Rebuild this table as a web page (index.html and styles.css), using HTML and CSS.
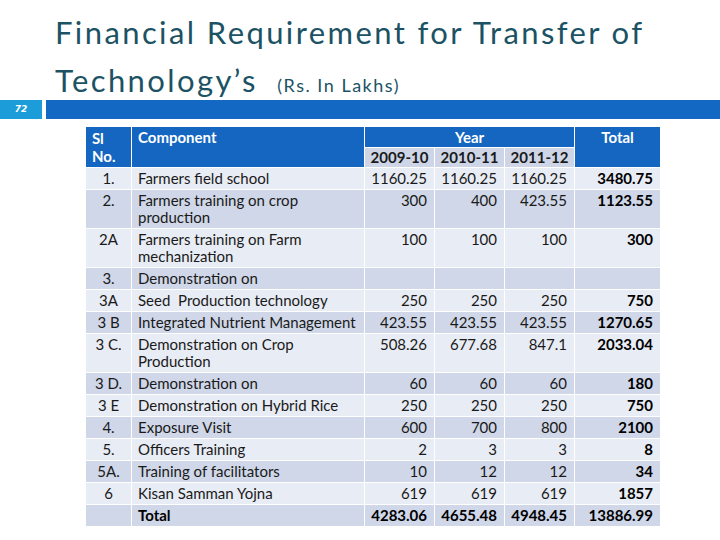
FILE: index.html
```html
<!DOCTYPE html>
<html>
<head>
<meta charset="utf-8">
<link rel="stylesheet" href="styles.css">
</head>
<body>
<div class="slide">
  <h1 class="title">Financial Requirement for Transfer of<br>Technology’s <span class="unit">(Rs. In Lakhs)</span></h1>
  <div class="strip">
    <div class="num">72</div>
    <div class="bar"></div>
  </div>
  <table class="fin">
    <colgroup>
      <col class="c-sl"><col class="c-comp"><col class="c-yr"><col class="c-yr"><col class="c-yr"><col class="c-tot">
    </colgroup>
    <thead>
      <tr class="h1">
        <th rowspan="2" class="sl-h">Sl No.</th>
        <th rowspan="2" class="comp-h">Component</th>
        <th colspan="3" class="year-h">Year</th>
        <th rowspan="2" class="tot-h">Total</th>
      </tr>
      <tr class="h2">
        <th class="sub">2009-10</th><th class="sub">2010-11</th><th class="sub">2011-12</th>
      </tr>
    </thead>
    <tbody>
      <tr class="lt"><td class="sl">1.</td><td>Farmers field school</td><td class="n">1160.25</td><td class="n">1160.25</td><td class="n">1160.25</td><td class="t">3480.75</td></tr>
      <tr class="dk"><td class="sl">2.</td><td>Farmers training on crop production</td><td class="n">300</td><td class="n">400</td><td class="n">423.55</td><td class="t">1123.55</td></tr>
      <tr class="lt"><td class="sl">2A</td><td>Farmers training on Farm mechanization</td><td class="n">100</td><td class="n">100</td><td class="n">100</td><td class="t">300</td></tr>
      <tr class="dk"><td class="sl">3.</td><td>Demonstration on</td><td class="n"></td><td class="n"></td><td class="n"></td><td class="t"></td></tr>
      <tr class="lt"><td class="sl">3A</td><td>Seed&nbsp; Production technology</td><td class="n">250</td><td class="n">250</td><td class="n">250</td><td class="t">750</td></tr>
      <tr class="dk"><td class="sl">3 B</td><td>Integrated Nutrient Management</td><td class="n">423.55</td><td class="n">423.55</td><td class="n">423.55</td><td class="t">1270.65</td></tr>
      <tr class="lt"><td class="sl">3 C.</td><td>Demonstration on Crop Production</td><td class="n">508.26</td><td class="n">677.68</td><td class="n">847.1</td><td class="t">2033.04</td></tr>
      <tr class="dk"><td class="sl">3 D.</td><td>Demonstration on</td><td class="n">60</td><td class="n">60</td><td class="n">60</td><td class="t">180</td></tr>
      <tr class="lt"><td class="sl">3 E</td><td>Demonstration on Hybrid Rice</td><td class="n">250</td><td class="n">250</td><td class="n">250</td><td class="t">750</td></tr>
      <tr class="dk"><td class="sl">4.</td><td>Exposure Visit</td><td class="n">600</td><td class="n">700</td><td class="n">800</td><td class="t">2100</td></tr>
      <tr class="lt"><td class="sl">5.</td><td>Officers Training</td><td class="n">2</td><td class="n">3</td><td class="n">3</td><td class="t">8</td></tr>
      <tr class="dk"><td class="sl">5A.</td><td>Training of facilitators</td><td class="n">10</td><td class="n">12</td><td class="n">12</td><td class="t">34</td></tr>
      <tr class="lt"><td class="sl">6</td><td>Kisan Samman Yojna</td><td class="n">619</td><td class="n">619</td><td class="n">619</td><td class="t">1857</td></tr>
      <tr class="dk total"><td class="sl"></td><td class="b">Total</td><td class="n b">4283.06</td><td class="n b">4655.48</td><td class="n b">4948.45</td><td class="t">13886.99</td></tr>
    </tbody>
  </table>
</div>
</body>
</html>
```
FILE: styles.css
```css
html, body {
  margin: 0;
  padding: 0;
  background: #ffffff;
}
.slide {
  width: 720px;
  height: 540px;
  position: relative;
  overflow: hidden;
}
.title {
  margin: 0;
  padding: 8px 0 0 55px;
  height: 92px;
  box-sizing: border-box;
  font-family: "Lato", "DejaVu Sans", sans-serif;
  font-weight: 400;
  font-size: 31px;
  line-height: 48px;
  letter-spacing: 2.4px;
  color: #1b5264;
  white-space: nowrap;
}
.unit {
  font-size: 18px;
  letter-spacing: 1.5px;
  margin-left: 9px;
}
.strip {
  display: flex;
  height: 19px;
  margin-top: 8px;
  gap: 4px;
}
.num {
  width: 42px;
  background: #1c9cd8;
  color: #ffffff;
  font-family: "DejaVu Sans", sans-serif;
  font-size: 9px;
  font-weight: bold;
  font-style: italic;
  line-height: 19px;
  text-align: center;
}
.bar {
  flex: 1;
  background: #1268c3;
}
.fin {
  margin: 7px 0 0 85px;
  border-collapse: collapse;
  table-layout: fixed;
  width: 575px;
  font-family: "Lato", "Open Sans", sans-serif;
  font-size: 15px;
  line-height: 17px;
  color: #1a1a1a;
}
.c-sl { width: 46px; }
.c-comp { width: 233px; }
.c-yr { width: 70px; }
.c-tot { width: 86px; }
.fin th, .fin td {
  border: 1px solid #ffffff;
  padding: 2px 6px 2px 6px;
  vertical-align: top;
}
.fin th {
  background: #1566c1;
  color: #ffffff;
  font-weight: bold;
  line-height: 16px;
}
.h1 th { height: 16px; }
.h2 th { height: 15px; line-height: 15px; }
.sl-h, .comp-h { text-align: left; }
.sl-h { padding-left: 4px; line-height: 18px !important; }
.year-h, .tot-h { text-align: center; }
.fin th.sub {
  background: #cdd5e7;
  color: #1a1a1a;
  text-align: center;
  padding: 2px 2px;
}
.lt td { background: #e8ecf4; }
.dk td { background: #cfd7e8; }
.sl { text-align: center; }
.n { text-align: right; padding-right: 7px !important; }
.t { text-align: right; font-weight: bold; color: #000; padding-right: 7px !important; }
.b { font-weight: bold; color: #000; }
```
